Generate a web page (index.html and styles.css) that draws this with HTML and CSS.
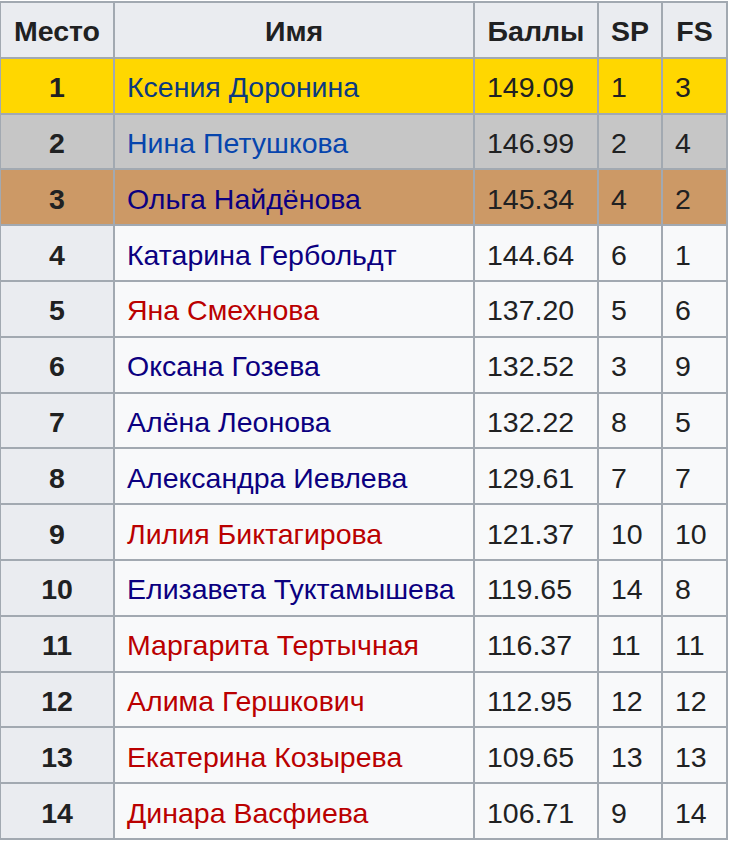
FILE: index.html
```html
<!DOCTYPE html>
<html lang="ru">
<head>
<meta charset="utf-8">
<link rel="stylesheet" href="styles.css">
</head>
<body>
<table class="wikitable">
<thead>
<tr><th class="c-place">Место</th><th class="c-name">Имя</th><th class="c-pts">Баллы</th><th class="c-sp">SP</th><th class="c-fs">FS</th></tr>
</thead>
<tbody>
<tr class="gold"><th>1</th><td><a class="lk-dark">Ксения Доронина</a></td><td>149.09</td><td>1</td><td>3</td></tr>
<tr class="silver"><th>2</th><td><a class="lk-blue">Нина Петушкова</a></td><td>146.99</td><td>2</td><td>4</td></tr>
<tr class="bronze"><th>3</th><td><a class="lk-visited">Ольга Найдёнова</a></td><td>145.34</td><td>4</td><td>2</td></tr>
<tr><th>4</th><td><a class="lk-visited">Катарина Гербольдт</a></td><td>144.64</td><td>6</td><td>1</td></tr>
<tr><th>5</th><td><a class="lk-red">Яна Смехнова</a></td><td>137.20</td><td>5</td><td>6</td></tr>
<tr><th>6</th><td><a class="lk-visited">Оксана Гозева</a></td><td>132.52</td><td>3</td><td>9</td></tr>
<tr><th>7</th><td><a class="lk-visited">Алёна Леонова</a></td><td>132.22</td><td>8</td><td>5</td></tr>
<tr><th>8</th><td><a class="lk-visited">Александра Иевлева</a></td><td>129.61</td><td>7</td><td>7</td></tr>
<tr><th>9</th><td><a class="lk-red">Лилия Биктагирова</a></td><td>121.37</td><td>10</td><td>10</td></tr>
<tr><th>10</th><td><a class="lk-visited">Елизавета Туктамышева</a></td><td>119.65</td><td>14</td><td>8</td></tr>
<tr><th>11</th><td><a class="lk-red">Маргарита Тертычная</a></td><td>116.37</td><td>11</td><td>11</td></tr>
<tr><th>12</th><td><a class="lk-red">Алима Гершкович</a></td><td>112.95</td><td>12</td><td>12</td></tr>
<tr><th>13</th><td><a class="lk-red">Екатерина Козырева</a></td><td>109.65</td><td>13</td><td>13</td></tr>
<tr><th>14</th><td><a class="lk-red">Динара Васфиева</a></td><td>106.71</td><td>9</td><td>14</td></tr>
</tbody>
</table>
</body>
</html>
```
FILE: styles.css
```css
html, body {
  margin: 0;
  padding: 0;
  background: #ffffff;
}
body {
  font-family: "Liberation Sans", Arial, sans-serif;
  font-size: 28.5px;
  color: #202122;
}
.wikitable {
  border-collapse: collapse;
  margin: 1px 0 0 -1px;
  background: #f8f9fa;
  color: #202122;
  table-layout: fixed;
  width: 727px;
}
.wikitable th,
.wikitable td {
  border: 2px solid #a2a9b1;
  height: 55.8px;
  box-sizing: border-box;
  padding: 3px 12px 0;
  line-height: 32px;
  white-space: nowrap;
}
.wikitable th {
  background: #eaecf0;
  font-weight: bold;
  text-align: center;
}
.wikitable td {
  text-align: left;
}
.c-place { width: 114px; }
.c-name { width: 360px; }
.c-pts { width: 124px; }
.c-sp { width: 64px; }
.c-fs { width: 65px; }
.wikitable tr.gold th,
.wikitable tr.gold td { background: #ffd700; }
.wikitable tr.silver th,
.wikitable tr.silver td { background: #c6c6c6; }
.wikitable tr.bronze th,
.wikitable tr.bronze td { background: #cc9966; }
a { text-decoration: none; }
.lk-blue { color: #0645ad; }
.lk-dark { color: #0b3a80; }
.lk-visited { color: #0b0080; }
.lk-red { color: #ba0000; }
```
